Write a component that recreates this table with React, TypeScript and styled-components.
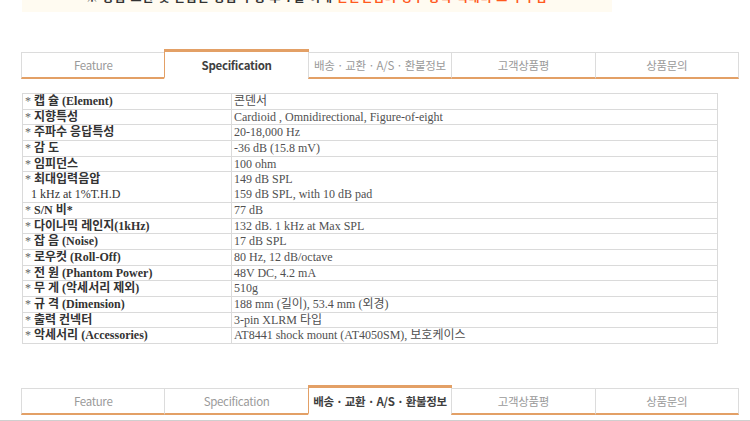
import React from "react";
import styled, { createGlobalStyle } from "styled-components";

const Global = createGlobalStyle`
  html, body { margin: 0; padding: 0; background: #fff; }
  body { width: 750px; height: 421px; overflow: hidden; }
`;

const ORANGE = "#e3a066";

const Page = styled.div`
  width: 750px;
  height: 421px;
  overflow: hidden;
`;

const Banner = styled.div`
  margin-left: 22px;
  width: 590px;
  height: 12px;
  background: #fffbf1;
  overflow: hidden;
  display: flex;
  justify-content: center;
`;

const BannerText = styled.div`
  margin-top: -10px;
  font-family: "Noto Sans CJK KR", sans-serif;
  font-weight: 700;
  font-size: 12px;
  line-height: 14px;
  color: #333;
  white-space: nowrap;
  letter-spacing: 1px;
`;

const Hot = styled.span`
  color: #ff5a1e;
`;

const TabBar = styled.div<{ $top: number }>`
  margin: ${(p) => p.$top}px 0 0 22px;
  width: 717px;
  height: 30px;
  display: grid;
  grid-template-columns: repeat(5, 1fr);
  align-items: end;
`;

const Tab = styled.div<{ $active?: boolean }>`
  box-sizing: border-box;
  display: flex;
  align-items: center;
  justify-content: center;
  white-space: nowrap;
  font-family: "Noto Sans CJK KR", "Noto Sans", sans-serif;
  font-size: 11.5px;
  letter-spacing: -0.3px;
  height: ${(p) => (p.$active ? 30 : 27)}px;
  background: #fff;
  color: ${(p) => (p.$active ? "#3f3f3f" : "#9a9a9a")};
  font-weight: ${(p) => (p.$active ? 700 : 400)};
  border-top: ${(p) => (p.$active ? `3px solid ${ORANGE}` : "1px solid #dcdcdc")};
  border-left: 1px solid ${(p) => (p.$active ? ORANGE : "#dcdcdc")};
  border-right: 1px solid ${(p) => (p.$active ? ORANGE : "#dcdcdc")};
  border-bottom: ${(p) => (p.$active ? "2px solid #fff" : `2px solid ${ORANGE}`)};
  margin-left: -1px;
  padding-bottom: 0;
`;

const SpecTable = styled.table`
  margin: 14px 0 0 22px;
  width: 696px;
  border-collapse: collapse;
  table-layout: fixed;
  border: 1px solid #d8d8d8;
`;

const Row = styled.tr``;

const Cell = styled.td<{ $label?: boolean }>`
  border: 1px solid #dadada;
  padding: 0 2px;
  height: 14.7px;
  line-height: 14.7px;
  font-family: "Liberation Serif", "Noto Sans CJK KR", serif;
  font-size: 12px;
  vertical-align: middle;
  white-space: nowrap;
  overflow: hidden;
  color: ${(p) => (p.$label ? "#333" : "#505050")};
  font-weight: ${(p) => (p.$label ? 700 : 400)};
  width: ${(p) => (p.$label ? "204px" : "auto")};
`;

const SubLine = styled.div<{ $plain?: boolean }>`
  font-weight: ${(p) => (p.$plain ? 400 : "inherit")};
  padding-left: ${(p) => (p.$plain ? "6px" : "0")};
  height: 14.7px;
  line-height: 14.7px;
  overflow: visible;
`;

const Star = styled.span`
  color: #666;
  font-weight: 400;
`;

const Rule = styled.div`
  margin-top: 5px;
  height: 0;
  border-top: 2px solid #cfcfcf;
  width: 750px;
`;

type Spec = { label: string; value: string; sub?: string; subValue?: string };

const specs: Spec[] = [
  { label: "캡 슐 (Element)", value: "콘덴서" },
  { label: "지향특성", value: "Cardioid , Omnidirectional, Figure-of-eight" },
  { label: "주파수 응답특성", value: "20-18,000 Hz" },
  { label: "감 도", value: "-36 dB (15.8 mV)" },
  { label: "임피던스", value: "100 ohm" },
  {
    label: "최대입력음압",
    value: "149 dB SPL",
    sub: "1 kHz at 1%T.H.D",
    subValue: "159 dB SPL, with 10 dB pad",
  },
  { label: "S/N 비*", value: "77 dB" },
  { label: "다이나믹 레인지(1kHz)", value: "132 dB. 1 kHz at Max SPL" },
  { label: "잡 음 (Noise)", value: "17 dB SPL" },
  { label: "로우컷 (Roll-Off)", value: "80 Hz, 12 dB/octave" },
  { label: "전 원 (Phantom Power)", value: "48V DC, 4.2 mA" },
  { label: "무 게 (악세서리 제외)", value: "510g" },
  { label: "규 격 (Dimension)", value: "188 mm (길이), 53.4 mm (외경)" },
  { label: "출력 컨넥터", value: "3-pin XLRM 타입" },
  { label: "악세서리 (Accessories)", value: "AT8441 shock mount (AT4050SM), 보호케이스" },
];

const tabs = ["Feature", "Specification", "배송 · 교환 · A/S · 환불정보", "고객상품평", "상품문의"];

function Tabs({ active, top }: { active: number; top: number }) {
  return (
    <TabBar $top={top}>
      {tabs.map((t, i) => (
        <Tab key={t} $active={i === active}>
          {t}
        </Tab>
      ))}
    </TabBar>
  );
}

export default function App() {
  return (
    <Page>
      <Global />
      <Banner>
        <BannerText>
          ※ 상품 교환 및 반품은 상품 수령 후 7일 이내 <Hot>단순변심의 경우 왕복 택배비 고객 부담</Hot>
        </BannerText>
      </Banner>
      <Tabs active={1} top={37} />
      <SpecTable>
        <tbody>
          {specs.map((s) => (
            <Row key={s.label}>
              <Cell $label>
                <SubLine>
                  <Star>* </Star>
                  {s.label}
                </SubLine>
                {s.sub && <SubLine $plain>{s.sub}</SubLine>}
              </Cell>
              <Cell>
                <SubLine>{s.value}</SubLine>
                {s.subValue && <SubLine>{s.subValue}</SubLine>}
              </Cell>
            </Row>
          ))}
        </tbody>
      </SpecTable>
      <Tabs active={2} top={41} />
      <Rule />
    </Page>
  );
}
